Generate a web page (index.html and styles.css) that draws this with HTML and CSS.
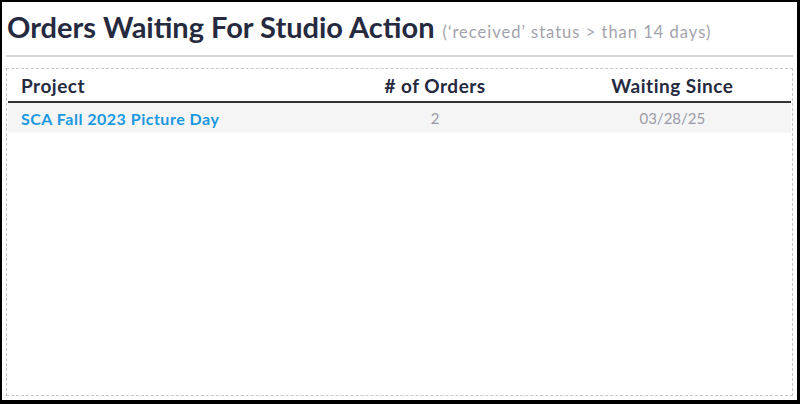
FILE: index.html
```html
<!DOCTYPE html>
<html>
<head>
<meta charset="utf-8">
<link rel="stylesheet" href="styles.css">
</head>
<body>
<div class="frame">
  <div class="heading">
    <h1 class="title">Orders Waiting For Studio Action</h1>
    <span class="subtitle">(‘received’ status &gt; than 14 days)</span>
  </div>
  <div class="panel">
    <table class="orders">
      <thead>
        <tr>
          <th class="col-project">Project</th>
          <th class="col-count">#&nbsp;of Orders</th>
          <th class="col-date">Waiting Since</th>
        </tr>
      </thead>
      <tbody>
        <tr>
          <td class="col-project"><a class="project-link" href="#">SCA Fall 2023 Picture Day</a></td>
          <td class="col-count">2</td>
          <td class="col-date">03/28/25</td>
        </tr>
      </tbody>
    </table>
  </div>
</div>
</body>
</html>
```
FILE: styles.css
```css
html, body {
  margin: 0;
  padding: 0;
  background: #000;
}
body {
  width: 800px;
  height: 404px;
  font-family: Lato, "Noto Sans", sans-serif;
}
.frame {
  box-sizing: border-box;
  width: 800px;
  height: 404px;
  border-style: solid;
  border-color: #000;
  border-width: 2px 3px 4px 2px;
  background: #fff;
  padding: 0 4px 4px 4px;
  display: flex;
  flex-direction: column;
}
.heading {
  display: flex;
  align-items: baseline;
  gap: 8px;
  height: 55px;
  padding: 0 0 0 1px;
  border-bottom: 2px solid #d4d4d6;
  box-sizing: border-box;
}
.title {
  margin: 0;
  font-size: 29px;
  font-weight: 700;
  color: #262a3f;
  line-height: 50px;
}
.subtitle {
  font-size: 16.5px;
  color: #a3a3ad;
  font-weight: 400;
  letter-spacing: 1px;
}
.panel {
  flex: 1;
  margin-top: 11px;
  border: 1px dashed #c8c8c8;
  padding: 0 1px;
}
.orders {
  width: 100%;
  border-collapse: collapse;
  table-layout: fixed;
}
.orders th {
  font-size: 19px;
  font-weight: 700;
  letter-spacing: 0.5px;
  color: #262a3f;
  height: 32px;
  padding: 0 13px;
  border-bottom: 2px solid #333;
  vertical-align: middle;
}
.orders td {
  height: 30px;
  padding: 0 13px;
  background: #f5f5f5;
  font-size: 15px;
  color: #9b9ba8;
  vertical-align: middle;
}
.col-project {
  width: 40%;
  text-align: left;
}
.col-count, .col-date {
  width: 30%;
  text-align: center;
}
.project-link {
  color: #1a98e0;
  font-size: 16px;
  font-weight: 700;
  letter-spacing: 0.5px;
  text-decoration: none;
}
```
